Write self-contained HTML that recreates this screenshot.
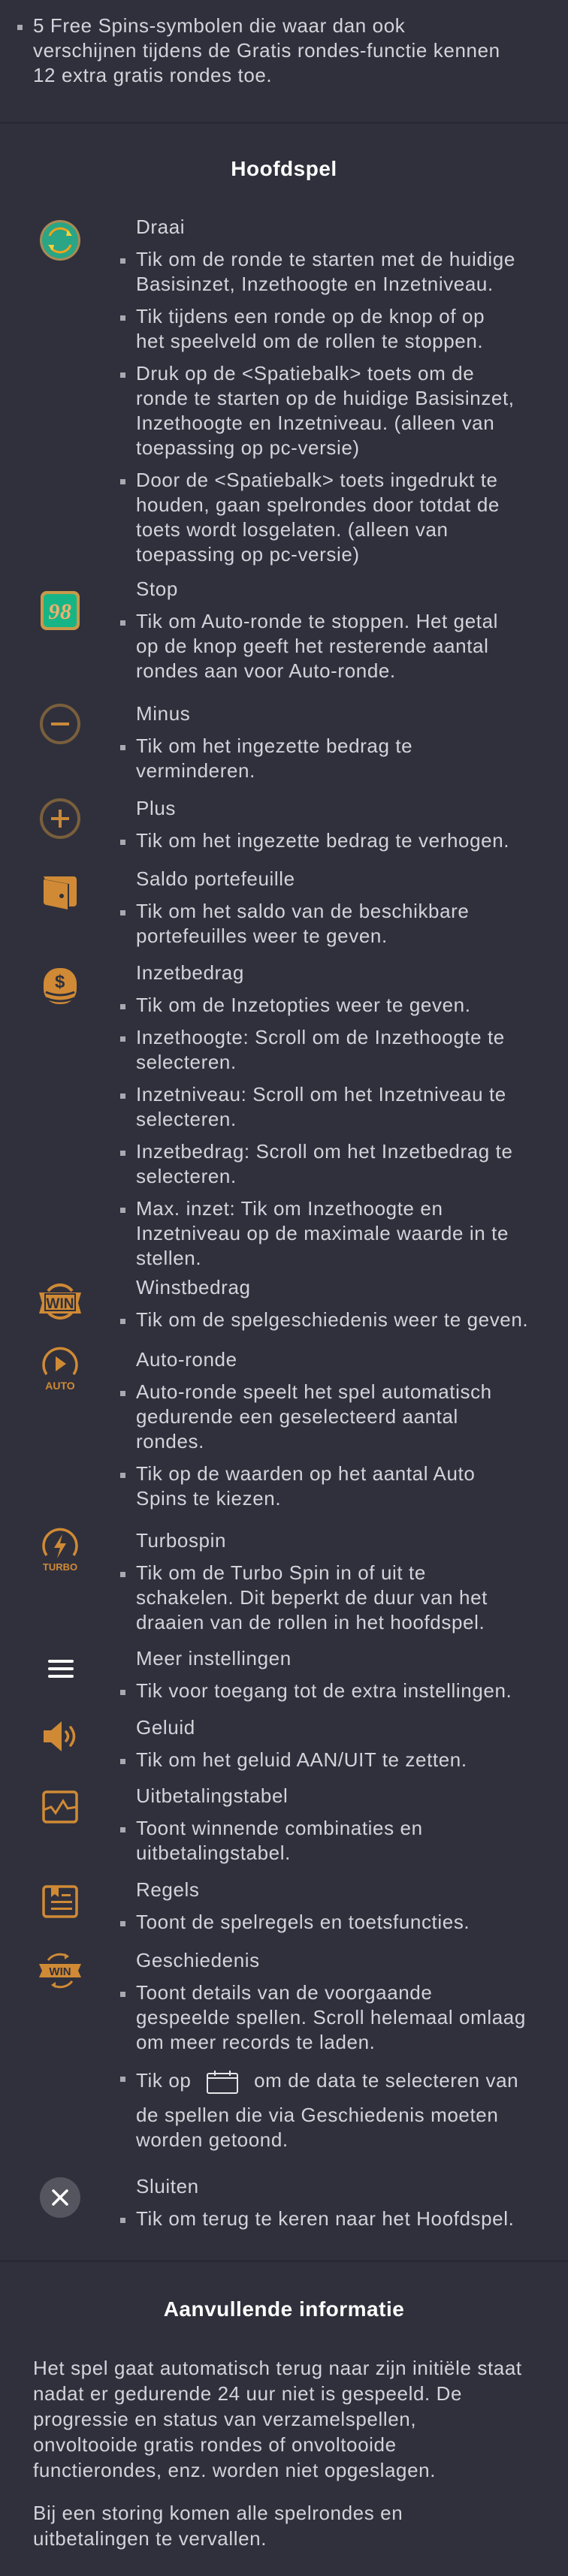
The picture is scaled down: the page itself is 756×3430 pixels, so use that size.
<!DOCTYPE html>
<html><head><meta charset="utf-8">
<style>
*{margin:0;padding:0;box-sizing:border-box}
html,body{width:756px;height:3430px;background:#30303c;overflow:hidden}
body{position:relative;font-family:"Liberation Sans",sans-serif;font-size:26px;letter-spacing:0.6px;color:#d3d3da}
.blk{position:absolute;left:181px;white-space:nowrap}
.t{line-height:33px;height:33px}
.b{position:relative;margin-top:10px;line-height:33px}
.b:before{content:"";position:absolute;left:-21px;top:15px;width:7px;height:7px;background:#a9a9b2}
.ico{position:absolute;left:52px;width:56px;height:56px}
.div{position:absolute;left:0;width:756px;height:3px;background:#292934}
h2{position:absolute;left:0;width:756px;text-align:center;font-size:28px;font-weight:bold;color:#fff;line-height:33px;letter-spacing:0.5px}
.p{position:absolute;left:44px;line-height:34px;white-space:nowrap}
</style></head><body>

<div class="blk" style="left:44px;top:18px"><div class="b" style="margin-top:0">5 Free Spins-symbolen die waar dan ook<br>verschijnen tijdens de Gratis rondes-functie kennen<br>12 extra gratis rondes toe.</div></div>
<div class="div" style="top:162px"></div>
<h2 style="top:208px">Hoofdspel</h2>

<svg class="ico" style="top:292px" viewBox="0 0 56 56"><circle cx="28" cy="28" r="27" fill="#a88a55"/><circle cx="28" cy="28" r="24" fill="#2aa585"/><path d="M14 22 A15 15 0 0 1 40 18" stroke="#f2a21c" stroke-width="3" fill="none"/><path d="M42 34 A15 15 0 0 1 16 38" stroke="#f2a21c" stroke-width="3" fill="none"/><path d="M38 14 L44 22 L36 22Z M18 42 L12 34 L20 34Z" fill="#f5d23a"/></svg>
<div class="blk" style="top:286px"><div class="t">Draai</div>
<div class="b">Tik om de ronde te starten met de huidige<br>Basisinzet, Inzethoogte en Inzetniveau.</div>
<div class="b">Tik tijdens een ronde op de knop of op<br>het speelveld om de rollen te stoppen.</div>
<div class="b">Druk op de &lt;Spatiebalk&gt; toets om de<br>ronde te starten op de huidige Basisinzet,<br>Inzethoogte en Inzetniveau. (alleen van<br>toepassing op pc-versie)</div>
<div class="b">Door de &lt;Spatiebalk&gt; toets ingedrukt te<br>houden, gaan spelrondes door totdat de<br>toets wordt losgelaten. (alleen van<br>toepassing op pc-versie)</div></div>

<svg class="ico" style="top:785px" viewBox="0 0 56 56"><rect x="2" y="2" width="52" height="52" rx="8" fill="#c79a4a"/><rect x="6" y="6" width="44" height="44" rx="5" fill="#17b585"/><text x="28" y="39" text-anchor="middle" font-family="Liberation Serif" font-style="italic" font-weight="bold" font-size="30" fill="#f0b070">98</text></svg>
<div class="blk" style="top:768px"><div class="t">Stop</div>
<div class="b">Tik om Auto-ronde te stoppen. Het getal<br>op de knop geeft het resterende aantal<br>rondes aan voor Auto-ronde.</div></div>

<svg class="ico" style="top:936px" viewBox="0 0 56 56"><circle cx="28" cy="28" r="25" fill="none" stroke="#7a5f3c" stroke-width="4"/><rect x="16" y="26" width="24" height="4" fill="#c9893a"/></svg>
<div class="blk" style="top:934px"><div class="t">Minus</div>
<div class="b">Tik om het ingezette bedrag te<br>verminderen.</div></div>

<svg class="ico" style="top:1062px" viewBox="0 0 56 56"><circle cx="28" cy="28" r="25" fill="none" stroke="#7a5f3c" stroke-width="4"/><rect x="16" y="26" width="24" height="4" fill="#c9893a"/><rect x="26" y="16" width="4" height="24" fill="#c9893a"/></svg>
<div class="blk" style="top:1060px"><div class="t">Plus</div>
<div class="b">Tik om het ingezette bedrag te verhogen.</div></div>

<svg class="ico" style="top:1159px" viewBox="0 0 56 56"><path d="M6 8 h40 a4 4 0 0 1 4 4 v32 a4 4 0 0 1 -4 4 h-6 v-30 L8 12Z" fill="#d08a35"/><path d="M6 12 L38 18 v34 L10 46 a4 4 0 0 1 -4 -4Z" fill="#d08a35"/><circle cx="30" cy="34" r="3" fill="#30303c"/></svg>
<div class="blk" style="top:1154px"><div class="t">Saldo portefeuille</div>
<div class="b">Tik om het saldo van de beschikbare<br>portefeuilles weer te geven.</div></div>

<svg class="ico" style="top:1285px" viewBox="0 0 56 56"><rect x="6" y="4" width="44" height="48" rx="20" fill="#d08a35"/><text x="28" y="30" text-anchor="middle" font-weight="bold" font-size="24" fill="#30303c">$</text><path d="M9 36 Q28 44 47 36 M9 44 Q28 52 47 44" stroke="#30303c" stroke-width="3" fill="none"/></svg>
<div class="blk" style="top:1279px"><div class="t">Inzetbedrag</div>
<div class="b">Tik om de Inzetopties weer te geven.</div>
<div class="b">Inzethoogte: Scroll om de Inzethoogte te<br>selecteren.</div>
<div class="b">Inzetniveau: Scroll om het Inzetniveau te<br>selecteren.</div>
<div class="b">Inzetbedrag: Scroll om het Inzetbedrag te<br>selecteren.</div>
<div class="b">Max. inzet: Tik om Inzethoogte en<br>Inzetniveau op de maximale waarde in te<br>stellen.</div></div>

<svg class="ico" style="top:1705px;left:50px;width:60px" viewBox="0 0 60 56"><path d="M14 14 A20 20 0 0 1 46 14" stroke="#d08a35" stroke-width="4" fill="none"/><path d="M14 42 A20 20 0 0 0 46 42" stroke="#d08a35" stroke-width="4" fill="none"/><path d="M2 16 h56 l-4 14 l4 14 h-56 l4 -14Z" fill="#d08a35"/><rect x="10" y="18" width="40" height="22" fill="none" stroke="#30303c" stroke-width="2"/><text x="30" y="37" text-anchor="middle" font-weight="bold" font-size="19" fill="#30303c" letter-spacing="0">WIN</text></svg>
<div class="blk" style="top:1698px"><div class="t">Winstbedrag</div>
<div class="b">Tik om de spelgeschiedenis weer te geven.</div></div>

<svg class="ico" style="top:1790px;height:64px" viewBox="0 0 56 64"><path d="M10 40 A22 22 0 1 1 46 40" stroke="#d08a35" stroke-width="3.5" fill="none"/><path d="M22 16 L36 26 L22 36Z" fill="#d08a35"/><text x="28" y="60" text-anchor="middle" font-weight="bold" font-size="14" fill="#d08a35" letter-spacing="0">AUTO</text></svg>
<div class="blk" style="top:1794px"><div class="t">Auto-ronde</div>
<div class="b">Auto-ronde speelt het spel automatisch<br>gedurende een geselecteerd aantal<br>rondes.</div>
<div class="b">Tik op de waarden op het aantal Auto<br>Spins te kiezen.</div></div>

<svg class="ico" style="top:2031px;height:64px" viewBox="0 0 56 64"><path d="M10 40 A22 22 0 1 1 46 40" stroke="#d08a35" stroke-width="3.5" fill="none"/><path d="M31 12 L20 30 H28 L24 44 L36 24 H28Z" fill="#d08a35"/><text x="28" y="60" text-anchor="middle" font-weight="bold" font-size="13" fill="#d08a35" letter-spacing="0">TURBO</text></svg>
<div class="blk" style="top:2035px"><div class="t">Turbospin</div>
<div class="b">Tik om de Turbo Spin in of uit te<br>schakelen. Dit beperkt de duur van het<br>draaien van de rollen in het hoofdspel.</div></div>

<svg class="ico" style="top:2194px" viewBox="0 0 56 56"><rect x="12" y="16" width="34" height="4" rx="2" fill="#fff"/><rect x="12" y="26" width="34" height="4" rx="2" fill="#fff"/><rect x="12" y="36" width="34" height="4" rx="2" fill="#fff"/></svg>
<div class="blk" style="top:2192px"><div class="t">Meer instellingen</div>
<div class="b">Tik voor toegang tot de extra instellingen.</div></div>

<svg class="ico" style="top:2284px" viewBox="0 0 56 56"><path d="M6 20 h10 L30 8 v40 L16 36 h-10Z" fill="#d08a35"/><path d="M36 22 q5 6 0 12" stroke="#d08a35" stroke-width="3.5" fill="none" stroke-linecap="round"/><path d="M42 16 q9 12 0 24" stroke="#d08a35" stroke-width="3.5" fill="none" stroke-linecap="round"/></svg>
<div class="blk" style="top:2284px"><div class="t">Geluid</div>
<div class="b">Tik om het geluid AAN/UIT te zetten.</div></div>

<svg class="ico" style="top:2378px" viewBox="0 0 56 56"><rect x="6" y="8" width="44" height="40" rx="4" fill="none" stroke="#d08a35" stroke-width="3.5"/><path d="M6 32 L16 28 L22 36 L32 20 L38 30 L50 28" stroke="#d08a35" stroke-width="3" fill="none"/></svg>
<div class="blk" style="top:2375px"><div class="t">Uitbetalingstabel</div>
<div class="b">Toont winnende combinaties en<br>uitbetalingstabel.</div></div>

<svg class="ico" style="top:2504px" viewBox="0 0 56 56"><rect x="6" y="8" width="44" height="40" rx="4" fill="none" stroke="#d08a35" stroke-width="3.5"/><path d="M16 8 h10 v14 l-5 -4 l-5 4Z" fill="#d08a35"/><rect x="30" y="18" width="12" height="3" fill="#d08a35"/><rect x="16" y="27" width="28" height="3" fill="#d08a35"/><rect x="16" y="36" width="28" height="3" fill="#d08a35"/></svg>
<div class="blk" style="top:2500px"><div class="t">Regels</div>
<div class="b">Toont de spelregels en toetsfuncties.</div></div>

<svg class="ico" style="top:2596px;left:50px;width:60px" viewBox="0 0 60 56"><path d="M14 14 A20 20 0 0 1 40 9" stroke="#d08a35" stroke-width="3" fill="none"/><path d="M46 42 A20 20 0 0 1 20 47" stroke="#d08a35" stroke-width="3" fill="none"/><path d="M36 5 l6 4 l-6 4Z M24 43 l-6 4 l6 4Z" fill="#d08a35"/><path d="M2 19 h56 l-4 9 l4 9 h-56 l4 -9Z" fill="#d08a35"/><text x="30" y="34" text-anchor="middle" font-weight="bold" font-size="15" fill="#30303c" letter-spacing="0">WIN</text></svg>
<div class="blk" style="top:2594px"><div class="t">Geschiedenis</div>
<div class="b">Toont details van de voorgaande<br>gespeelde spellen. Scroll helemaal omlaag<br>om meer records te laden.</div>
<div class="b" style="line-height:40px;margin-top:14px">Tik op <svg width="44" height="34" viewBox="0 0 44 34" style="vertical-align:middle;margin:0 12px"><rect x="2" y="6" width="40" height="26" rx="2" fill="none" stroke="#e6e6ea" stroke-width="2"/><line x1="2" y1="12" x2="42" y2="12" stroke="#e6e6ea" stroke-width="2"/><line x1="12" y1="2" x2="12" y2="9" stroke="#e6e6ea" stroke-width="2"/><line x1="32" y1="2" x2="32" y2="9" stroke="#e6e6ea" stroke-width="2"/></svg> om de data te selecteren van</div>
<div style="line-height:33px;margin-top:10px">de spellen die via Geschiedenis moeten<br>worden getoond.</div></div>

<svg class="ico" style="top:2898px" viewBox="0 0 56 56"><circle cx="28" cy="28" r="27" fill="#55555f"/><path d="M19 19 L37 37 M37 19 L19 37" stroke="#fff" stroke-width="3.5" stroke-linecap="round"/></svg>
<div class="blk" style="top:2895px"><div class="t">Sluiten</div>
<div class="b">Tik om terug te keren naar het Hoofdspel.</div></div>

<div class="div" style="top:3009px"></div>
<h2 style="top:3058px">Aanvullende informatie</h2>
<div class="p" style="top:3136px">Het spel gaat automatisch terug naar zijn initiële staat<br>nadat er gedurende 24 uur niet is gespeeld. De<br>progressie en status van verzamelspellen,<br>onvoltooide gratis rondes of onvoltooide<br>functierondes, enz. worden niet opgeslagen.</div>
<div class="p" style="top:3329px">Bij een storing komen alle spelrondes en<br>uitbetalingen te vervallen.</div>
</body></html>
